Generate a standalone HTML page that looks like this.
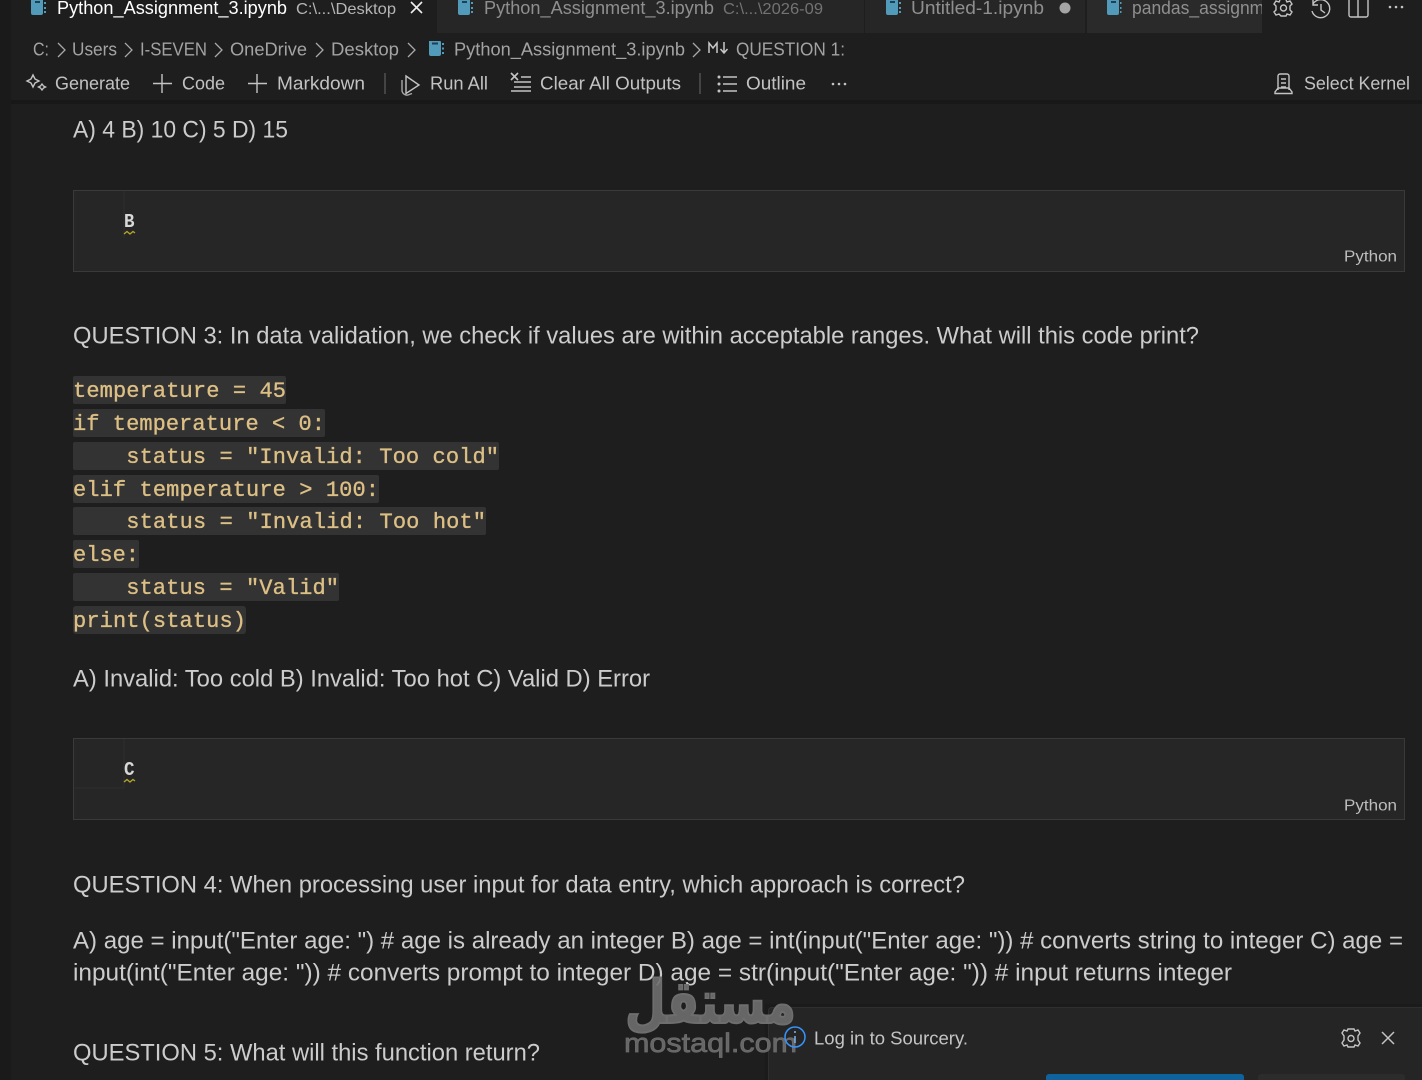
<!DOCTYPE html>
<html><head><meta charset="utf-8"><style>
html,body{margin:0;padding:0;background:#1e1e1e;overflow:hidden}
svg{display:block}
text{font-family:"Liberation Sans",sans-serif;white-space:pre}
.m{font-family:"Liberation Mono",monospace;font-size:22px;fill:#dcbf85;stroke:#dcbf85;stroke-width:.35px}
.b{font-size:24px;fill:#cccccc}
.t{font-size:18.5px;fill:#c2c2c2}
.c{font-size:18.5px;fill:#a3a3a3}
.i{fill:none;stroke:#c4c4c4;stroke-width:1.4}
.s{fill:none;stroke:#a8a8a8;stroke-width:1.3}
.r{fill:#333333}
</style></head><body>
<svg width="1422" height="1080" viewBox="0 0 1422 1080" xmlns="http://www.w3.org/2000/svg">
<rect width="1422" height="1080" fill="#1e1e1e"/>
<rect x="0" y="0" width="11" height="1080" fill="#1a1a1a"/>
<!-- tabs -->
<rect x="11" y="0" width="1411" height="33" fill="#1e1e1e"/>
<rect x="437" y="0" width="427" height="33" fill="#262626"/>
<rect x="865" y="0" width="220" height="33" fill="#262626"/>
<rect x="1087" y="0" width="175" height="33" fill="#2a2a2a"/>
<g fill="#519aba">
<path d="M31 0h12v13a2 2 0 0 1-2 2H33a2 2 0 0 1-2-2z"/><path d="M44 2h2v2h-2zM44 7h2v2h-2zM44 11h2v2h-2z"/>
<path d="M458 0h12v13a2 2 0 0 1-2 2h-8a2 2 0 0 1-2-2z"/><path d="M471 2h2v2h-2zM471 7h2v2h-2zM471 11h2v2h-2z"/>
<path d="M886 0h12v13a2 2 0 0 1-2 2h-8a2 2 0 0 1-2-2z"/><path d="M899 2h2v2h-2zM899 7h2v2h-2zM899 11h2v2h-2z"/>
<path d="M1107 0h12v13a2 2 0 0 1-2 2h-8a2 2 0 0 1-2-2z"/><path d="M1120 2h1.500v2h-1.500zM1120 7h1.500v2h-1.500zM1120 11h1.500v2h-1.500z"/>
</g>
<path d="M35 2h5M462 2h5M890 2h5M1111 2h5" stroke="#1f3f55" stroke-width="2"/>
<text x="57" y="14" font-size="18.500" fill="#ffffff" textLength="230" lengthAdjust="spacingAndGlyphs">Python_Assignment_3.ipynb</text>
<text x="296" y="14" font-size="16" fill="#b5b5b5" textLength="100" lengthAdjust="spacingAndGlyphs">C:\...\Desktop</text>
<path d="M411 2l11 11M422 2l-11 11" stroke="#eeeeee" stroke-width="1.600" fill="none"/>
<text x="484" y="14" font-size="18.500" fill="#8f8f8f" textLength="230" lengthAdjust="spacingAndGlyphs">Python_Assignment_3.ipynb</text>
<text x="723" y="14" font-size="16" fill="#737373" textLength="100" lengthAdjust="spacingAndGlyphs">C:\...\2026-09</text>
<text x="911" y="14" font-size="18.500" fill="#8f8f8f" textLength="133" lengthAdjust="spacingAndGlyphs">Untitled-1.ipynb</text>
<circle cx="1065" cy="8" r="5.500" fill="#a5a5a5"/>
<svg x="1087" y="0" width="175" height="33"><text x="45" y="14" font-size="18.500" fill="#8f8f8f" textLength="142" lengthAdjust="spacingAndGlyphs">pandas_assignme</text></svg>
<!-- top-right icons -->
<g class="i">
<circle cx="1283.500" cy="8" r="3"/>
<path d="M1280 0l-1 2-3-1-2 3 2 2v4l-2 2 2 3 3-1 2 2h5l1-2 3 1 2-3-2-2V6l2-2-2-3-3 1-1-2"/>
<path d="M1313 4a9 9 0 1 1-1 7M1313 0v5h5M1321 4v6l4 3"/>
<path d="M1349 0v15a2 2 0 0 0 2 2h15a2 2 0 0 0 2-2V0M1358 0v17"/>
</g>
<g fill="#c4c4c4"><circle cx="1390" cy="7" r="1.300"/><circle cx="1396" cy="7" r="1.300"/><circle cx="1402" cy="7" r="1.300"/></g>
<!-- breadcrumbs -->
<text class="c" x="33" y="55.500" textLength="16" lengthAdjust="spacingAndGlyphs">C:</text>
<path class="s" d="M58 43l7 7-7 7"/>
<text class="c" x="72" y="55.500" textLength="45" lengthAdjust="spacingAndGlyphs">Users</text>
<path class="s" d="M125 43l7 7-7 7"/>
<text class="c" x="140" y="55.500" textLength="67" lengthAdjust="spacingAndGlyphs">I-SEVEN</text>
<path class="s" d="M215 43l7 7-7 7"/>
<text class="c" x="230" y="55.500" textLength="77" lengthAdjust="spacingAndGlyphs">OneDrive</text>
<path class="s" d="M316 43l7 7-7 7"/>
<text class="c" x="331" y="55.500" textLength="68" lengthAdjust="spacingAndGlyphs">Desktop</text>
<path class="s" d="M408 43l7 7-7 7"/>
<path d="M429 41h11a1 1 0 0 1 1 1v12a2 2 0 0 1-2 2h-8a2 2 0 0 1-2-2z" fill="#519aba"/>
<path d="M442 43h2v2h-2zM442 47.500h2v2h-2zM442 52h2v2h-2z" fill="#519aba"/>
<path d="M432 43.500h6" stroke="#1f3f55" stroke-width="2"/>
<text class="c" x="454" y="55.500" textLength="231" lengthAdjust="spacingAndGlyphs">Python_Assignment_3.ipynb</text>
<path class="s" d="M693 43l7 7-7 7"/>
<path d="M709 53V43l4 5 4-5v10M724 42v11M720.500 49l3.500 4 3.500-4" fill="none" stroke="#c8c8c8" stroke-width="1.500"/>
<text class="c" x="736" y="55.500" textLength="109" lengthAdjust="spacingAndGlyphs">QUESTION 1:</text>
<!-- toolbar -->
<g class="i">
<path d="M33 75l2 4 4 2-4 2-2 4-2-4-4-2 4-2zM42 84l1.500 2 2 1-2 1-1.500 2-1.500-2-2-1 2-1z"/>
<path d="M162 74v19M153 83.500h19M257 74v19M248 83.500h19"/>
<path d="M385 73v21" stroke="#555555"/>
<path d="M406 76l13 9-13 8.500z"/>
<path d="M402 80v10a5 5 0 0 0 6 5l4-1.500" stroke="#a8a8a8"/>
<path d="M511 73l7 7M518 73l-7 7" stroke-width="1.600"/>
<path d="M521 77h10M514 82h17M514 87h17M511 91h20"/>
<path d="M700 73v21" stroke="#555555"/>
<path d="M723 77h14M723 84h14M723 91h14"/>
</g>
<g fill="#c4c4c4"><circle cx="719" cy="77" r="1.500"/><circle cx="719" cy="84" r="1.500"/><circle cx="719" cy="91" r="1.500"/><circle cx="833" cy="84" r="1.300"/><circle cx="839" cy="84" r="1.300"/><circle cx="845" cy="84" r="1.300"/></g>
<text class="t" x="55" y="89.500" textLength="75" lengthAdjust="spacingAndGlyphs">Generate</text>
<text class="t" x="182" y="89.500" textLength="43" lengthAdjust="spacingAndGlyphs">Code</text>
<text class="t" x="277" y="89.500" textLength="88" lengthAdjust="spacingAndGlyphs">Markdown</text>
<text class="t" x="430" y="89.500" textLength="58" lengthAdjust="spacingAndGlyphs">Run All</text>
<text class="t" x="540" y="89.500" textLength="141" lengthAdjust="spacingAndGlyphs">Clear All Outputs</text>
<text class="t" x="746" y="89.500" textLength="60" lengthAdjust="spacingAndGlyphs">Outline</text>
<path class="i" d="M1278 90V76a2 2 0 0 1 2-2h7a2 2 0 0 1 2 2v14M1278 88l-3 4v1.500h17V92l-3-4zM1281 79h5M1281 83h5M1281 87h5"/>
<text class="t" x="1304" y="89.500" textLength="106" lengthAdjust="spacingAndGlyphs">Select Kernel</text>
<rect x="11" y="100" width="1411" height="4" fill="#181818"/>
<!-- body -->
<text class="b" x="73" y="137.500" textLength="215" lengthAdjust="spacingAndGlyphs">A) 4 B) 10 C) 5 D) 15</text>
<!-- cell 1 -->
<rect x="73.500" y="190.500" width="1331" height="81" fill="#262626" stroke="#3a3a3a"/>
<path d="M124 191v47" stroke="#2e2e2e"/>
<text x="124" y="227" font-size="19" font-weight="bold" fill="#d8d8d8" style="font-family:'Liberation Mono',monospace" textLength="10.500" lengthAdjust="spacingAndGlyphs">B</text>
<path d="M124 234l3-2.500 3 2.500 3-2.500 2 1.500" fill="none" stroke="#b5a52c" stroke-width="1.300"/>
<text x="1344" y="261.500" font-size="16" fill="#bdbdbd" textLength="53" lengthAdjust="spacingAndGlyphs">Python</text>
<text class="b" x="73" y="343.500" textLength="1126" lengthAdjust="spacingAndGlyphs">QUESTION 3: In data validation, we check if values are within acceptable ranges. What will this code print?</text>
<!-- code -->
<rect class="r" x="73" y="376" width="213" height="28" rx="2"/>
<rect class="r" x="73" y="409" width="252" height="28" rx="2"/>
<rect class="r" x="73" y="442" width="426" height="28" rx="2"/>
<rect class="r" x="73" y="475" width="306" height="28" rx="2"/>
<rect class="r" x="73" y="507" width="413" height="28" rx="2"/>
<rect class="r" x="73" y="540" width="66" height="28" rx="2"/>
<rect class="r" x="73" y="573" width="266" height="28" rx="2"/>
<rect class="r" x="73" y="606" width="173" height="28" rx="3"/>
<text class="m" x="73" y="397" textLength="213">temperature = 45</text>
<text class="m" x="73" y="430" textLength="252">if temperature &lt; 0:</text>
<text class="m" x="73" y="463" textLength="426">    status = "Invalid: Too cold"</text>
<text class="m" x="73" y="496" textLength="306">elif temperature &gt; 100:</text>
<text class="m" x="73" y="528" textLength="413">    status = "Invalid: Too hot"</text>
<text class="m" x="73" y="561" textLength="66">else:</text>
<text class="m" x="73" y="594" textLength="266">    status = "Valid"</text>
<text class="m" x="73" y="627" textLength="173">print(status)</text>
<text class="b" x="73" y="686.500" textLength="577" lengthAdjust="spacingAndGlyphs">A) Invalid: Too cold B) Invalid: Too hot C) Valid D) Error</text>
<!-- cell 2 -->
<rect x="73.500" y="738.500" width="1331" height="81" fill="#262626" stroke="#3a3a3a"/>
<path d="M124 739v49M74 788h50" stroke="#2e2e2e"/>
<text x="124" y="775" font-size="19" font-weight="bold" fill="#d8d8d8" style="font-family:'Liberation Mono',monospace" textLength="10.500" lengthAdjust="spacingAndGlyphs">C</text>
<path d="M124 782l3-2.500 3 2.500 3-2.500 2 1.500" fill="none" stroke="#b5a52c" stroke-width="1.300"/>
<text x="1344" y="810.500" font-size="16" fill="#bdbdbd" textLength="53" lengthAdjust="spacingAndGlyphs">Python</text>
<text class="b" x="73" y="892.500" textLength="892" lengthAdjust="spacingAndGlyphs">QUESTION 4: When processing user input for data entry, which approach is correct?</text>
<text class="b" x="73" y="948.500" textLength="1330" lengthAdjust="spacingAndGlyphs">A) age = input("Enter age: ") # age is already an integer B) age = int(input("Enter age: ")) # converts string to integer C) age =</text>
<text class="b" x="73" y="980.500" textLength="1159" lengthAdjust="spacingAndGlyphs">input(int("Enter age: ")) # converts prompt to integer D) age = str(input("Enter age: ")) # input returns integer</text>
<text class="b" x="73" y="1060.500" textLength="467" lengthAdjust="spacingAndGlyphs">QUESTION 5: What will this function return?</text>
<!-- notification -->
<rect x="765" y="1004" width="657" height="76" fill="#1b1b1b"/>
<rect x="768.500" y="1007.500" width="660" height="80" rx="3" fill="#252526" stroke="#2f2f2f"/>
<text x="814" y="1044.500" font-size="18.500" fill="#c4c4c4" textLength="154" lengthAdjust="spacingAndGlyphs">Log in to Sourcery.</text>
<circle cx="1351" cy="1038.500" r="3" class="i"/>
<path class="i" d="M1348 1029l-1 2-3-1-2 3 2 3v4l-2 3 2 3 3-1 1 2h6l1-2 3 1 2-3-2-3v-4l2-3-2-3-3 1-1-2z"/>
<path d="M1382 1032l12 12M1394 1032l-12 12" stroke="#c4c4c4" stroke-width="1.500" fill="none"/>
<rect x="1046" y="1074" width="198" height="12" rx="3" fill="#0e639c"/>
<rect x="1258" y="1074" width="147" height="12" rx="3" fill="#2c2c2c"/>
<!-- watermark -->
<g fill="#6e6e6e" fill-opacity="0.900">
<text x="625" y="1023" font-size="60" font-weight="bold" stroke="#6e6e6e" stroke-width="2" style="font-family:'DejaVu Sans',sans-serif" textLength="171" lengthAdjust="spacingAndGlyphs">مستقل</text>
<text x="624" y="1052" font-size="27" stroke="#6e6e6e" stroke-width="0.700" textLength="173" lengthAdjust="spacingAndGlyphs">mostaql.com</text>
</g>
<circle cx="795" cy="1037" r="10" fill="none" stroke="#3794ff" stroke-width="1.500"/>
<path d="M795 1036v7" stroke="#7fb4ef" stroke-width="1.500"/>
<circle cx="795" cy="1032" r="1" fill="#7fb4ef"/>
</svg>
</body></html>
